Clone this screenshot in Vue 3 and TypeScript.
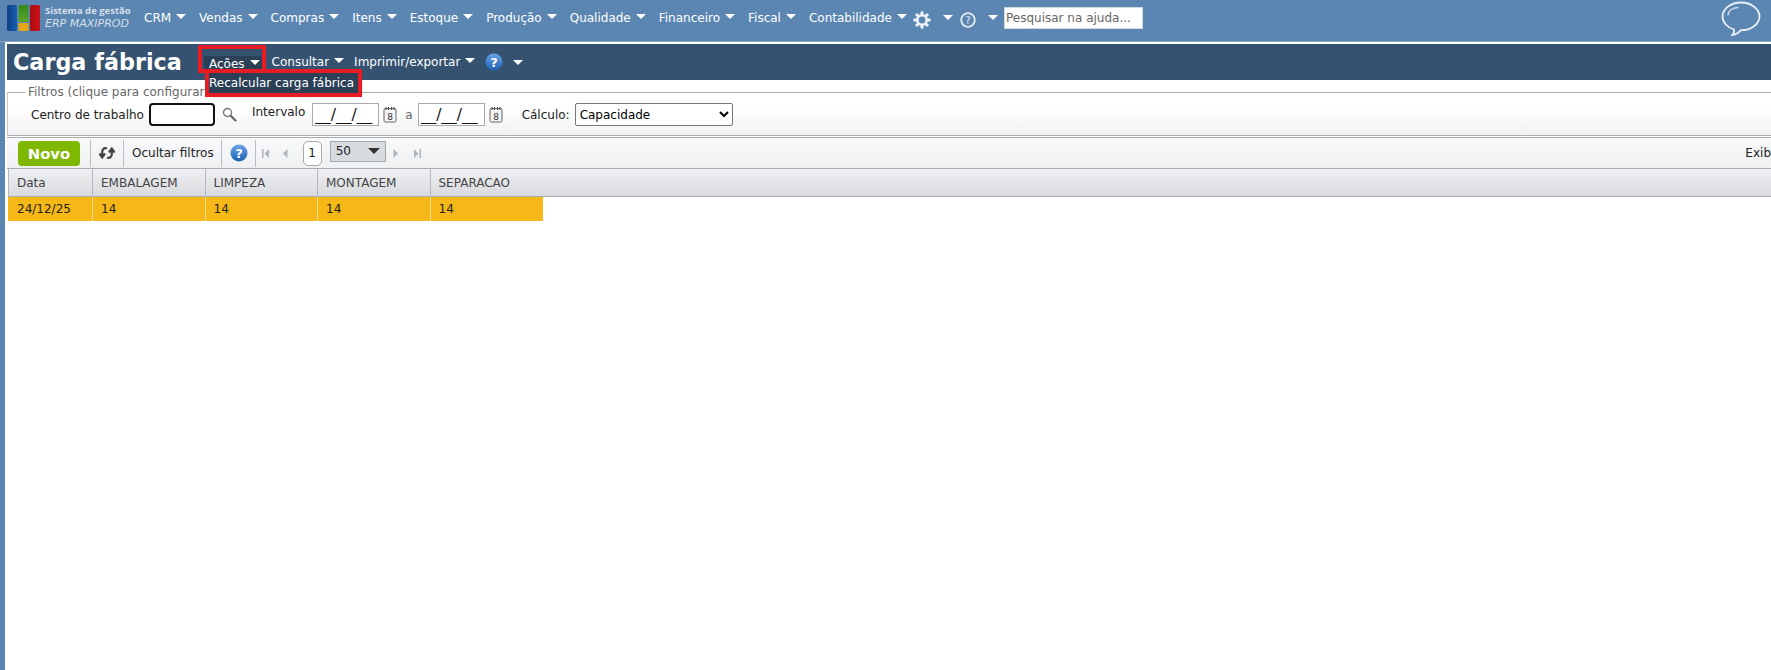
<script setup lang="ts">
const menus = ["CRM", "Vendas", "Compras", "Itens", "Estoque", "Produção", "Qualidade", "Financeiro", "Fiscal", "Contabilidade"];
const columns = ["Data", "EMBALAGEM", "LIMPEZA", "MONTAGEM", "SEPARACAO"];
const row = ["24/12/25", "14", "14", "14", "14"];
</script>

<template>
  <div class="page">
    <header class="topbar">
      <div class="logo">
        <svg width="34" height="26" viewBox="0 0 34 26">
          <defs>
            <linearGradient id="lb" x1="0" x2="1" y1="0" y2="0"><stop offset="0" stop-color="#0d3f86" /><stop offset="1" stop-color="#1a5fb0" /></linearGradient>
            <linearGradient id="lg" x1="0" x2="0" y1="0" y2="1"><stop offset="0" stop-color="#2f8a1c" /><stop offset="1" stop-color="#5fa52a" /></linearGradient>
            <linearGradient id="lr" x1="0" x2="1" y1="0" y2="0"><stop offset="0" stop-color="#a80d12" /><stop offset="1" stop-color="#cf1015" /></linearGradient>
          </defs>
          <rect x="0" y="0" width="10" height="26" rx="1.500" fill="url(#lb)" />
          <rect x="11.500" y="0" width="10" height="17" rx="1" fill="url(#lg)" />
          <rect x="11.500" y="18" width="10" height="8" rx="1" fill="#e8a716" />
          <rect x="23" y="0" width="10" height="26" rx="1.500" fill="url(#lr)" />
        </svg>
        <div class="logo-text">
          <span class="logo-small">Sistema de gestão</span>
          <span class="logo-big">ERP MAXIPROD</span>
        </div>
      </div>
      <nav class="mainmenu">
        <span v-for="m in menus" :key="m" class="mainitem">{{ m }}<i class="caret"></i></span>
      </nav>
      <svg class="gear" width="18" height="18" viewBox="0 0 18 18">
        <g fill="#eef2f6">
          <rect x="7.500" y="0.500" width="3" height="17" />
          <rect x="7.500" y="0.500" width="3" height="17" transform="rotate(45 9 9)" />
          <rect x="7.500" y="0.500" width="3" height="17" transform="rotate(90 9 9)" />
          <rect x="7.500" y="0.500" width="3" height="17" transform="rotate(135 9 9)" />
        </g>
        <circle cx="9" cy="9" r="6" fill="#eef2f6" />
        <circle cx="9" cy="9" r="3.400" fill="#5b86b2" />
      </svg>
      <i class="caret gear-caret"></i>
      <svg class="help-top" width="16" height="16" viewBox="0 0 16 16">
        <circle cx="8" cy="8" r="6.800" fill="none" stroke="#e4ebf2" stroke-width="1.800" />
        <text x="8" y="11.500" text-anchor="middle" class="help-q">?</text>
      </svg>
      <i class="caret help-caret"></i>
      <input class="helpsearch" placeholder="Pesquisar na ajuda..." />
      <svg class="chat" width="40" height="36" viewBox="0 0 40 36">
        <path d="M20 1.500C9.800 1.500 1.500 7.800 1.500 15.500c0 6 5 11 11.500 13 .3 2-.5 4-1.500 5.500 3.500-.5 6.500-2.500 8.500-4.800 10.200 0 18.500-6.200 18.500-13.700S30.200 1.500 20 1.500Z" fill="none" stroke="#e8eff6" stroke-width="1.800" />
        <path d="M7 14c.5-4 4-7 10-7.500" fill="none" stroke="#c9d8e7" stroke-width="1.300" stroke-linecap="round" />
      </svg>
    </header>

    <main class="content">
      <div class="titlebar">
        <h1 class="title">Carga fábrica</h1>
        <div class="actions">
          <span class="action action-open">Ações<i class="caret"></i></span>
          <span class="action">Consultar<i class="caret"></i></span>
          <span class="action">Imprimir/exportar<i class="caret"></i></span>
          <svg class="help-blue" width="18" height="18" viewBox="0 0 18 18">
            <defs>
              <linearGradient id="hb" x1="0" x2="0" y1="0" y2="1"><stop offset="0" stop-color="#6aa5e6" /><stop offset="1" stop-color="#1c5fb4" /></linearGradient>
            </defs>
            <circle cx="9" cy="9" r="8.500" fill="url(#hb)" />
            <text x="9" y="13.500" text-anchor="middle" class="help-blue-q">?</text>
          </svg>
          <i class="caret help-blue-caret"></i>
        </div>
      </div>

      <fieldset class="filters">
        <legend>Filtros (clique para configurar) (?)</legend>
        <label class="flabel">Centro de trabalho</label>
        <input class="wc-input" />
        <svg class="search" width="15" height="15" viewBox="0 0 15 15">
          <circle cx="5.500" cy="5.500" r="4" fill="#fff" stroke="#777" stroke-width="1.400" />
          <path d="M8.700 8.700L13.500 13.500" stroke="#666" stroke-width="2.200" stroke-linecap="round" />
        </svg>
        <label class="flabel interval">Intervalo</label>
        <input class="date" value="__/__/__" />
        <svg class="cal" width="14" height="17" viewBox="0 0 14 17">
          <rect x="1" y="2.500" width="12" height="13.500" rx="1.500" fill="#f4f4f4" stroke="#666" />
          <path d="M3 1v3M5.500 1v3M8.500 1v3M11 1v3" stroke="#444" />
          <text x="7" y="13.500" text-anchor="middle" class="cal-n">8</text>
        </svg>
        <span class="a-sep">a</span>
        <input class="date date-to" value="__/__/__" />
        <svg class="cal" width="14" height="17" viewBox="0 0 14 17">
          <rect x="1" y="2.500" width="12" height="13.500" rx="1.500" fill="#f4f4f4" stroke="#666" />
          <path d="M3 1v3M5.500 1v3M8.500 1v3M11 1v3" stroke="#444" />
          <text x="7" y="13.500" text-anchor="middle" class="cal-n">8</text>
        </svg>
        <label class="flabel calc">Cálculo:</label>
        <select class="calc-select"><option>Capacidade</option></select>
      </fieldset>

      <div class="toolbar">
        <button class="novo">Novo</button>
        <span class="tsep"></span>
        <svg class="refresh" width="16" height="14" viewBox="0 0 16 14">
          <path d="M8 2.500C5 1.500 3.200 3.200 3.200 6V10M0.300 7.500L3.200 11.500 6.100 7.500" fill="none" stroke="#444" stroke-width="2.200" />
          <path d="M8 11.500C11 12.500 12.800 10.800 12.800 8V4M9.900 6.500L12.800 2.500 15.700 6.500" fill="none" stroke="#444" stroke-width="2.200" />
        </svg>
        <span class="tsep"></span>
        <span class="hide-filters">Ocultar filtros</span>
        <span class="tsep"></span>
        <svg class="help-blue tool-help" width="18" height="18" viewBox="0 0 18 18">
          <circle cx="9" cy="9" r="8.500" fill="url(#hb)" />
          <text x="9" y="13.500" text-anchor="middle" class="help-blue-q">?</text>
        </svg>
        <span class="tsep"></span>
        <div class="pager">
          <svg width="9" height="11" viewBox="0 0 9 11"><path d="M1 1h1.500v9H1zM8 1v9L3.500 5.500z" fill="#aeb4ba" /></svg>
          <svg class="pg-prev" width="6" height="11" viewBox="0 0 6 11"><path d="M5.500 1v9L1 5.500z" fill="#aeb4ba" /></svg>
          <span class="pg-num">1</span>
          <div class="pg-size"><span>50</span><i class="pg-caret"></i></div>
          <svg class="pg-next" width="6" height="11" viewBox="0 0 6 11"><path d="M.5 1v9L5 5.500z" fill="#aeb4ba" /></svg>
          <svg class="pg-last" width="9" height="11" viewBox="0 0 9 11"><path d="M1 1v9l4.500-4.500zM6.500 1H8v9H6.500z" fill="#aeb4ba" /></svg>
        </div>
        <span class="exib">Exib</span>
      </div>

      <div class="grid-wrap">
        <div class="ghead">
          <div v-for="c in columns" :key="c" class="gcell">{{ c }}</div>
        </div>
        <div class="grow">
          <div v-for="(v, i) in row" :key="i" class="gcell">{{ v }}</div>
        </div>
      </div>
    </main>

    <!-- submenu aberto e marcações vermelhas -->
    <div class="submenu">Recalcular carga fábrica</div>
    <div class="mark mark-acoes"></div>
    <div class="mark mark-menu"></div>
  </div>
</template>

<style>
html, body { margin: 0; background: #fff; }
</style>

<style scoped>
.page {
  position: relative;
  width: 1771px;
  height: 670px;
  overflow: hidden;
  background: #5b86b2;
  font-family: "DejaVu Sans", sans-serif;
  font-size: 12px;
  color: #222;
  display: flex;
  flex-direction: column;
}
.topbar {
  height: 42px;
  flex: none;
  display: flex;
  align-items: center;
  box-sizing: border-box;
  padding: 0 0 6px 7px;
  background: #5b86b2;
  border-bottom: 1px solid #8fa8c2;
  color: #fff;
  position: relative;
}
.logo { display: flex; align-items: center; width: 137px; flex: none; }
.logo-text { display: flex; flex-direction: column; margin-left: 4px; color: #d5dfe9; white-space: nowrap; }
.logo-small { font-family: "Open Sans", sans-serif; font-size: 9.500px; font-weight: 700; line-height: 13px; }
.logo-big { font-size: 11px; font-style: italic; line-height: 14px; }
.mainmenu { display: flex; align-items: center; width: 769px; flex: none; }
.mainitem { margin-right: 13px; white-space: nowrap; }
.caret {
  display: inline-block;
  width: 0;
  height: 0;
  border-left: 5px solid transparent;
  border-right: 5px solid transparent;
  border-top: 5px solid #fff;
  margin-left: 5px;
  vertical-align: 3px;
}
.content {
  flex: 1;
  margin-left: 5px;
  padding-top: 2px;
  background: #fff;
  display: flex;
  flex-direction: column;
  min-height: 0;
}
.titlebar {
  height: 36px;
  flex: none;
  margin-left: 2px;
  background: #355270;
  display: flex;
  align-items: center;
  color: #fff;
}
.title {
  font-size: 22.300px;
  font-weight: bold;
  margin: 0 0 0 6px;
  width: 191px;
  flex: none;
  white-space: nowrap;
}
.actions { display: flex; align-items: center; }
.action { margin-right: 10px; white-space: nowrap; }
.action-open {
  background: #2b3f57;
  padding: 0 6px 0 5px;
  margin-right: 6px;
  height: 16px;
  line-height: 16px;
  margin-top: 4px;
}
.filters {
  margin: 5px 0 0 2px;
  flex: none;
  height: 51px;
  min-width: 0;
  box-sizing: border-box;
  border: 0;
  border-top: 1px solid #a9adb3;
  border-bottom: 1px solid #a9adb3;
  border-left: 1px solid #c4c7cb;
  background: linear-gradient(#fff 14px, #f1f2f3);
  padding: 4px 0 0 23px;
  display: flex;
  align-items: center;
}
.filters legend { padding: 0 3px; margin-left: -6px; color: #666; line-height: 14px; }
.flabel { white-space: nowrap; }
.wc-input {
  width: 66px;
  height: 23px;
  box-sizing: border-box;
  border: 2px solid #111;
  border-radius: 4px;
  margin-left: 5px;
}
.search { margin-left: 7px; }
.interval { margin: 0 0 6px 15px; }
.date {
  width: 67px;
  height: 23px;
  box-sizing: border-box;
  border: 1px solid #aaa;
  font-family: "DejaVu Sans", sans-serif;
  font-size: 15.500px;
  color: #111;
  padding: 0 2px;
  margin-left: 7px;
}
.date-to { margin-left: 5px; }
.cal { margin-left: 4px; }
.a-sep { margin-left: 8px; color: #666; }
.calc { margin-left: 19px; }
.calc-select {
  width: 158px;
  height: 23px;
  margin-left: 5px;
  font-family: "DejaVu Sans", sans-serif;
  font-size: 12px;
  background: #fff;
  border: 1px solid #777;
  border-radius: 2px;
}
.toolbar {
  margin: 1px 0 0 2px;
  height: 32px;
  flex: none;
  box-sizing: border-box;
  border-top: 1px solid #a9adb3;
  border-bottom: 1px solid #a9adb3;
  background: linear-gradient(#f8f9fa, #eef0f1);
  display: flex;
  align-items: center;
  padding-left: 11px;
}
.novo {
  width: 62px;
  height: 25px;
  border: 0;
  border-radius: 4px;
  background: #7fb800;
  color: #fff;
  font-family: "DejaVu Sans", sans-serif;
  font-size: 14.800px;
  font-weight: bold;
  padding: 0;
  margin-right: 10px;
}
.tsep { width: 1px; height: 27px; background: #b9bdc2; flex: none; }
.refresh { margin: 0 8px; }
.hide-filters { margin: 0 7px 0 8px; white-space: nowrap; }
.tool-help { margin: 0 7px 0 8px; }
.pager { display: flex; align-items: center; margin-left: 5px; }
.pg-prev { margin-left: 12px; }
.pg-num {
  width: 19px;
  height: 25px;
  margin-left: 15px;
  box-sizing: border-box;
  border: 1px solid #aaa;
  border-radius: 5px;
  background: #fff;
  display: flex;
  align-items: center;
  justify-content: center;
}
.pg-size {
  width: 56px;
  height: 21px;
  margin: 0 0 4px 8px;
  box-sizing: border-box;
  border: 1px solid #a3a8ad;
  background: #d9dcdf;
  display: flex;
  align-items: center;
  justify-content: space-between;
  padding: 0 5px;
}
.pg-caret {
  width: 0;
  height: 0;
  border-left: 6px solid transparent;
  border-right: 6px solid transparent;
  border-top: 6px solid #333;
}
.pg-next { margin-left: 7px; }
.pg-last { margin-left: 14px; }
.exib { margin-left: auto; white-space: nowrap; }
.grid-wrap { margin-left: 3px; }
.ghead {
  height: 28px;
  box-sizing: border-box;
  display: flex;
  border-bottom: 1px solid #a9adb3;
  background: linear-gradient(#eef0f2, #d8dadd);
  color: #444;
}
.grow {
  display: inline-flex;
  height: 24px;
  background: #f5b816;
  vertical-align: top;
}
.gcell {
  width: 112.500px;
  box-sizing: border-box;
  padding-left: 8px;
  display: flex;
  align-items: center;
  border-right: 1px solid #b4b8bd;
  white-space: nowrap;
}
.gcell:first-child { width: 85px; padding-left: 9px; }
.ghead .gcell:first-child { border-left: 1px solid #b4b8bd; padding-left: 8px; }
.grow .gcell { border-right: 1px solid #f8dc8b; }
.grow .gcell:last-child { border-right: 0; }
.ghead .gcell:last-child { border-right: 0; }
.submenu {
  position: absolute;
  left: 207px;
  top: 72px;
  width: 152px;
  height: 22px;
  background: #2b3f57;
  color: #fff;
  line-height: 22px;
  padding-left: 2px;
  box-sizing: border-box;
  box-shadow: 2px 2px 3px rgba(0, 0, 0, 0.3);
  white-space: nowrap;
}
.mark { position: absolute; border: 4px solid #e81c24; box-sizing: border-box; }
.mark-acoes { left: 198px; top: 45px; width: 68px; height: 28px; }
.mark-menu { left: 205px; top: 69px; width: 157px; height: 28px; }
.help-q { font-size: 10px; fill: #e4ebf2; }
.help-blue-q { font-size: 13px; font-weight: bold; fill: #fff; }
.cal-n { font-size: 9px; fill: #333; }
.gear { margin-top: 4px; flex: none; }
.gear-caret { margin-left: 12px; }
.help-top { margin: 4px 0 0 7px; flex: none; }
.help-caret { margin-left: 12px; }
.helpsearch {
  width: 139px;
  height: 22px;
  margin-left: 6px;
  box-sizing: border-box;
  border: 1px solid #d0d8e0;
  padding: 0 1px;
  font-family: "DejaVu Sans", sans-serif;
  font-size: 12px;
}
.helpsearch::placeholder { color: #666; }
.chat { position: absolute; right: 10px; top: 1px; }
.help-blue { flex: none; }
.help-blue-caret { margin-left: 10px; }
</style>
